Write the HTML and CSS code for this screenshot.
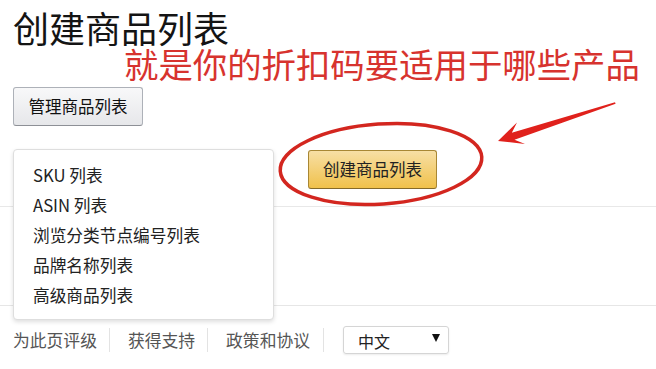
FILE: index.html
```html
<!DOCTYPE html>
<html lang="zh-CN">
<head>
<meta charset="utf-8">
<title>创建商品列表</title>
<link rel="stylesheet" href="styles.css">
</head>
<body>
<div class="page">
  <h1 class="title">创建商品列表</h1>
  <div class="note">就是你的折扣码要适用于哪些产品</div>
  <div class="toolbar">
    <button class="btn btn-gray">管理商品列表</button>
  </div>
  <div class="section section-top">
    <button class="btn btn-yellow">创建商品列表</button>
  </div>
  <div class="section section-empty"></div>
  <div class="footer">
    <a class="flink">为此页评级</a>
    <a class="flink">获得支持</a>
    <a class="flink">政策和协议</a>
    <div class="lang">
      <span>中文</span>
      <span class="caret"></span>
    </div>
  </div>

  <ul class="menu">
    <li>SKU 列表</li>
    <li>ASIN 列表</li>
    <li>浏览分类节点编号列表</li>
    <li>品牌名称列表</li>
    <li>高级商品列表</li>
  </ul>

  <svg class="marks" width="656" height="369" viewBox="0 0 656 369">
    <ellipse cx="381" cy="164" rx="101" ry="40" transform="rotate(-4 381 164)" fill="none" stroke="#d3261f" stroke-width="3.5"/>
    <polygon points="615,102.3 615.6,103.8 514.5,139.8 525,144 498,141 517,122.5 511.8,132.8" fill="#e0211c"/>
  </svg>
</div>
</body>
</html>
```

FILE: styles.css
```css
* { box-sizing: border-box; }
html, body { margin: 0; padding: 0; background: #fff; }
body {
  font-family: "Noto Sans CJK SC", "Noto Sans", sans-serif;
  color: #111;
  width: 656px;
  height: 369px;
  overflow: hidden;
}
.page {
  position: relative;
  width: 656px;
  height: 369px;
}
.title {
  margin: 0;
  padding: 3px 0 0 13px;
  font-size: 36px;
  font-weight: 400;
  line-height: 48px;
  color: #141414;
}
.note {
  padding-left: 124px;
  font-size: 34.4px;
  line-height: 24px;
  color: #d7332e;
}
.toolbar {
  padding: 12px 0 0 13px;
}
.btn {
  font-family: "Noto Sans CJK SC", sans-serif;
  font-size: 16.5px;
  color: #111;
  height: 39px;
  padding: 0 14px;
  border-radius: 3px;
  line-height: 37px;
  cursor: pointer;
}
.btn-gray {
  width: 130px;
  background: linear-gradient(#f8f8f9, #e6e7ea);
  border: 1px solid #adb1b8;
  border-bottom-color: #8d9096;
}
.btn-yellow {
  width: 129px;
  background: linear-gradient(#f7dfa5, #f0c14b);
  border: 1px solid #a88734;
  border-bottom-color: #846a29;
  color: #222;
}
.section-top {
  padding: 24px 0 0 308px;
  height: 81px;
  border-bottom: 1px solid #e8e8e8;
}
.section-empty {
  height: 99px;
  border-bottom: 1px solid #e6e6e6;
}
.footer {
  display: flex;
  align-items: center;
  padding: 20px 0 0 13px;
}
.flink {
  font-size: 16.8px;
  line-height: 24px;
  color: #555;
  padding-right: 12px;
  margin-right: 18px;
  border-right: 1px solid #e3e3e3;
}
.flink:nth-child(3) { margin-right: 19px; padding-right: 13px; }
.lang {
  width: 106px;
  height: 28px;
  border: 1px solid #d5d5d5;
  border-radius: 3px;
  box-shadow: 0 1px 2px rgba(0,0,0,0.08);
  display: flex;
  align-items: center;
  justify-content: space-between;
  padding: 2px 8px 0 14px;
  font-size: 16px;
  color: #222;
}
.caret {
  width: 0;
  height: 0;
  border-left: 4px solid transparent;
  border-right: 4px solid transparent;
  border-top: 8px solid #111;
  margin-top: -6px;
}
.menu {
  position: absolute;
  left: 13px;
  top: 149px;
  width: 261px;
  height: 171px;
  margin: 0;
  padding: 10px 0 0 19px;
  list-style: none;
  background: #fff;
  border: 1px solid #dedede;
  border-radius: 4px;
  box-shadow: 0 2px 4px rgba(0,0,0,0.13);
}
.menu li {
  font-size: 16.7px;
  line-height: 30px;
  color: #222;
}
.marks {
  position: absolute;
  left: 0;
  top: 0;
  pointer-events: none;
}
```
